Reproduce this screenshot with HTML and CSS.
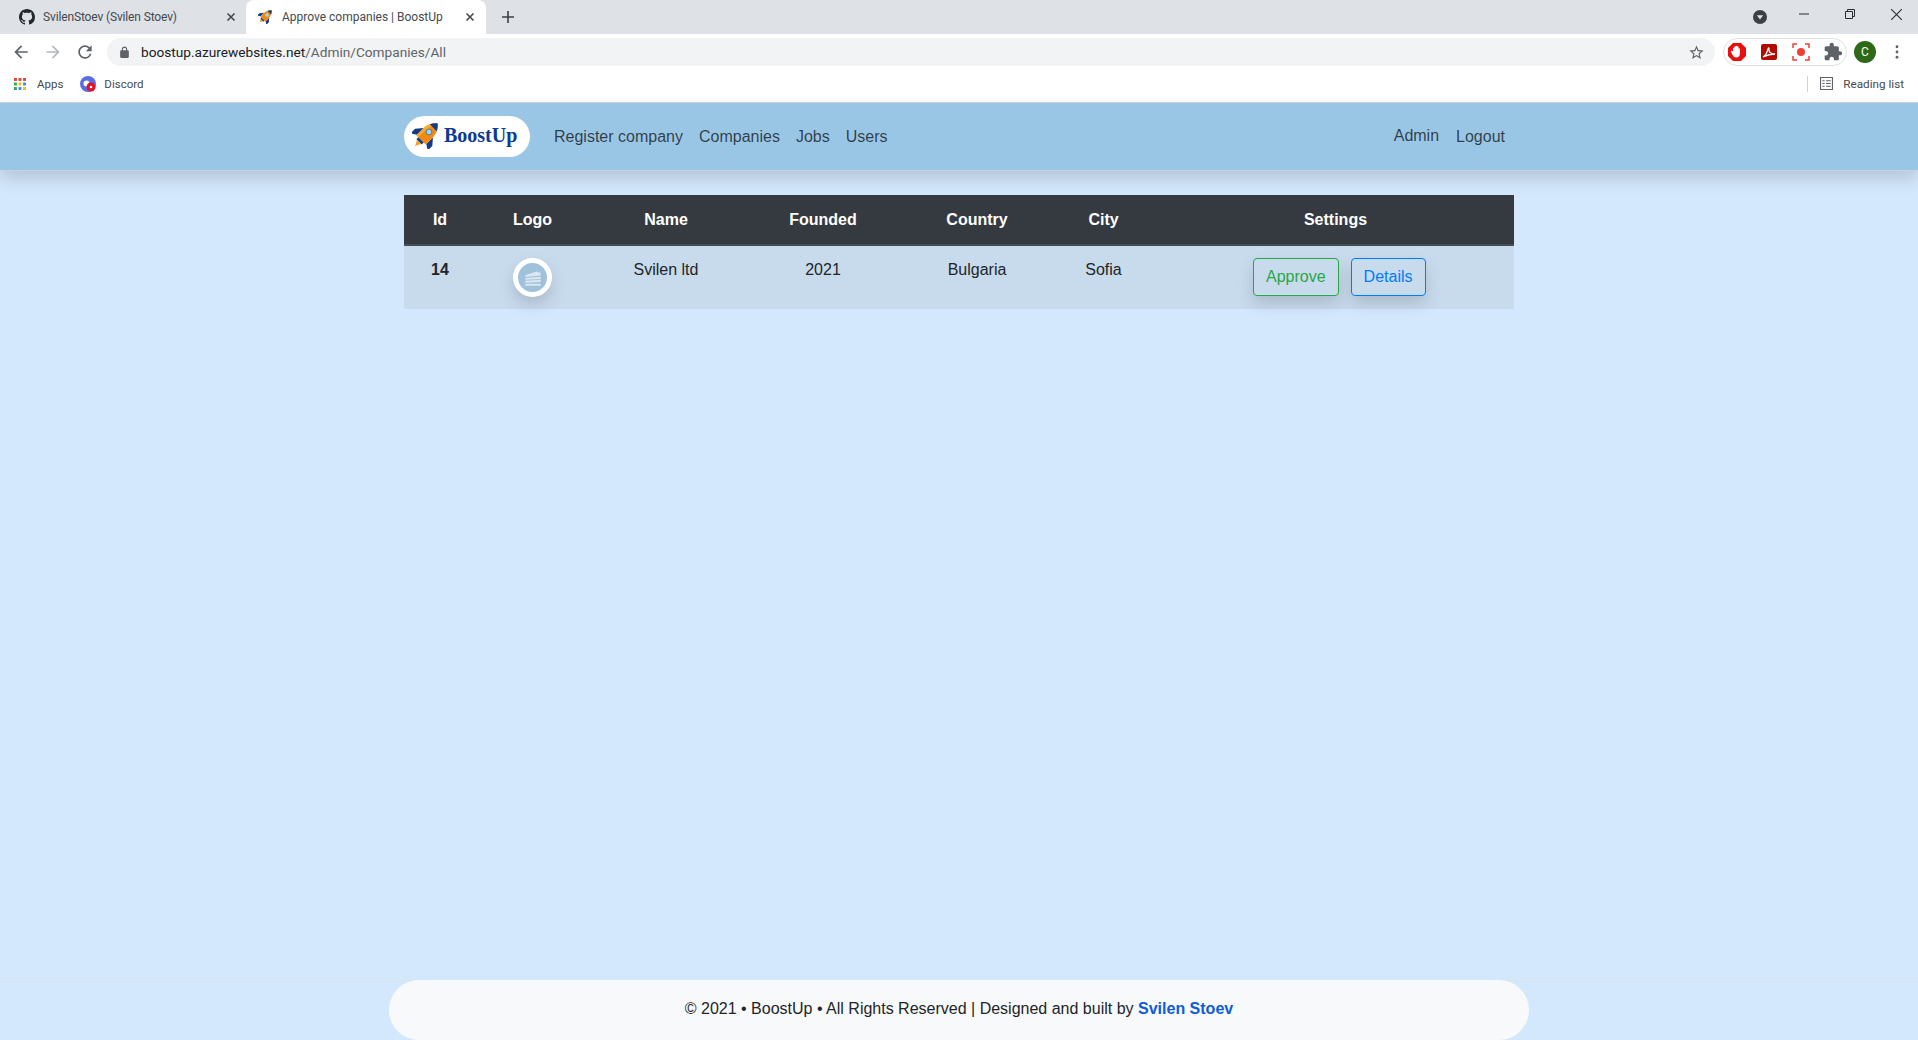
FILE: index.html
```html
<!DOCTYPE html>
<html lang="en">
<head>
<meta charset="utf-8">
<title>Approve companies | BoostUp</title>
<link rel="stylesheet" href="styles.css">
</head>
<body>
<div class="browser">
  <div class="tabstrip">
    <div class="tab">
      <svg class="favicon" viewBox="0 0 16 16"><path fill="#24292e" d="M8 0C3.58 0 0 3.58 0 8c0 3.54 2.29 6.53 5.47 7.59.4.07.55-.17.55-.38 0-.19-.01-.82-.01-1.49-2.01.37-2.53-.49-2.69-.94-.09-.23-.48-.94-.82-1.13-.28-.15-.68-.52-.01-.53.63-.01 1.08.58 1.23.82.72 1.21 1.87.87 2.33.66.07-.52.28-.87.51-1.07-1.78-.2-3.64-.89-3.64-3.95 0-.87.31-1.59.82-2.15-.08-.2-.36-1.02.08-2.12 0 0 .67-.21 2.2.82.64-.18 1.32-.27 2-.27.68 0 1.36.09 2 .27 1.53-1.04 2.2-.82 2.2-.82.44 1.1.16 1.92.08 2.12.51.56.82 1.27.82 2.15 0 3.07-1.87 3.75-3.65 3.95.29.25.54.73.54 1.48 0 1.07-.01 1.93-.01 2.2 0 .21.15.46.55.38A8.013 8.013 0 0016 8c0-4.42-3.58-8-8-8z"/></svg>
      <span class="tab-title tab-title-tight">SvilenStoev (Svilen Stoev)</span>
      <svg class="tab-close" viewBox="0 0 10 10"><path d="M1.5 1.5l7 7M8.5 1.5l-7 7"/></svg>
    </div>
    <div class="tab tab-active">
      <svg class="favicon favicon-rocket" viewBox="0 0 32 32"><g transform="rotate(45 16 16)"><path fill="#0f3d8c" d="M9 14L3 21v7l6-4zM23 14l6 7v7l-6-4z"/><path fill="#f5880f" d="M16 0c5 4 7.500 10 7 18v7H9v-7C8.500 10 11 4 16 0z"/><path fill="#0f3d8c" d="M16 0c2.200 1.800 4 4 5.200 6.500H10.800C12 4 13.800 1.800 16 0zM12 25h8v3h-8z"/><circle cx="16" cy="13" r="3.400" fill="#9fd8f5"/><path fill="#f7a01b" d="M13 28h6l-3 6z"/></g></svg>
      <span class="tab-title">Approve companies | BoostUp</span>
      <svg class="tab-close" viewBox="0 0 10 10"><path d="M1.500 1.500l7 7M8.500 1.500l-7 7"/></svg>
    </div>
    <svg class="newtab" viewBox="0 0 12 12"><path d="M6 0v12M0 6h12"/></svg>
    <div class="strip-space"></div>
    <div class="tabsearch"><svg viewBox="0 0 14 14"><circle cx="7" cy="7" r="7" fill="#3c4043"/><path d="M3.800 5.200h6.400L7 9.600z" fill="#dee1e6"/></svg></div>
    <div class="winctl">
      <svg viewBox="0 0 10 10"><path d="M0 5h10"/></svg>
      <svg viewBox="0 0 10 10"><path d="M.5 2.500h7v7h-7zM2.500 2.500v-2h7v7h-2"/></svg>
      <svg viewBox="0 0 10 10"><path d="M0 0l10 10M10 0L0 10"/></svg>
    </div>
  </div>

  <div class="toolbar">
    <svg class="tool" viewBox="0 0 24 24"><path d="M20 11H7.830l5.590-5.590L12 4l-8 8 8 8 1.410-1.410L7.830 13H20v-2z"/></svg>
    <svg class="tool tool-off" viewBox="0 0 24 24"><path d="M4 11h12.170l-5.590-5.590L12 4l8 8-8 8-1.410-1.410L16.170 13H4v-2z"/></svg>
    <svg class="tool" viewBox="0 0 24 24"><path d="M17.650 6.350A7.958 7.958 0 0012 4c-4.420 0-7.990 3.580-7.990 8s3.570 8 7.990 8c3.730 0 6.840-2.550 7.730-6h-2.080A5.990 5.990 0 0112 18c-3.310 0-6-2.690-6-6s2.690-6 6-6c1.660 0 3.140.690 4.220 1.780L13 11h7V4l-2.350 2.350z"/></svg>
    <div class="omnibox">
      <svg class="lock" viewBox="0 0 24 24"><path d="M18 8h-1V6c0-2.760-2.240-5-5-5S7 3.240 7 6v2H6c-1.100 0-2 .9-2 2v10c0 1.100.9 2 2 2h12c1.100 0 2-.9 2-2V10c0-1.100-.9-2-2-2zM9 6c0-1.660 1.340-3 3-3s3 1.340 3 3v2H9V6z"/></svg>
      <span class="url"><span class="url-host">boostup.azurewebsites.net</span>/Admin/Companies/All</span>
      <svg class="star" viewBox="0 0 24 24"><path d="M22 9.240l-7.190-.62L12 2 9.190 8.630 2 9.240l5.460 4.730L5.820 21 12 17.270 18.180 21l-1.630-7.030L22 9.240zM12 15.400l-3.760 2.270 1-4.280-3.320-2.880 4.380-.38L12 6.100l1.710 4.040 4.380.38-3.320 2.880 1 4.280L12 15.400z"/></svg>
    </div>
    <div class="ext-pill">
      <svg class="ext" viewBox="0 0 20 20"><path fill="#e8100f" d="M6 1h8l5 5v8l-5 5H6l-5-5V6z"/><path fill="#fff" d="M6 9V6.500c0-1 1.300-1 1.300 0V5c0-1 1.400-1 1.400 0V4.500c0-1 1.500-1 1.500 0V5c0-1 1.400-1 1.400 0v2c0-1 1.300-1 1.300 0v4.500c0 2.500-1.500 4-3.700 4-2 0-2.700-1-3.500-2.500L4 10c-.5-1 .7-1.500 1.300-.8z"/></svg>
      <svg class="ext" viewBox="0 0 20 20"><rect x="2" y="2" width="16" height="16" rx="2" fill="#b30b00"/><path fill="none" stroke="#fff" stroke-width="1.300" d="M4 15c2-1 4-4 5-8 .3-1.500 1.300-1.500 1 .5-.3 2.500 2 4.500 6 4.500-3 0-8 1-12 3z"/></svg>
      <svg class="ext" viewBox="0 0 20 20"><path fill="none" stroke="#ea4335" stroke-width="1.500" d="M2 6V2h4M14 2h4v4M18 14v4h-4M6 18H2v-4"/><circle cx="10" cy="10" r="4" fill="#ea4335"/></svg>
      <svg class="ext ext-grey" viewBox="0 0 24 24"><path d="M20.500 11H19V7c0-1.100-.9-2-2-2h-4V3.500C13 2.120 11.880 1 10.500 1S8 2.120 8 3.500V5H4c-1.100 0-1.990.9-1.990 2v3.800H3.500c1.490 0 2.700 1.210 2.700 2.700s-1.210 2.700-2.700 2.700H2V20c0 1.100.9 2 2 2h3.800v-1.500c0-1.490 1.210-2.700 2.700-2.700 1.490 0 2.700 1.210 2.700 2.700V22H17c1.100 0 2-.9 2-2v-4h1.500c1.380 0 2.500-1.120 2.500-2.500S21.880 11 20.500 11z"/></svg>
    </div>
    <div class="avatar-slot"><span class="avatar">C</span></div>
    <div class="menu-slot"><svg class="dots" viewBox="0 0 4 16"><circle cx="2" cy="2" r="1.600"/><circle cx="2" cy="8" r="1.600"/><circle cx="2" cy="14" r="1.600"/></svg></div>
  </div>

  <div class="bookmarks">
    <svg class="apps" viewBox="0 0 14 14"><g fill="#ea4335"><rect width="3.400" height="3.400"/><rect x="5.300" width="3.400" height="3.400"/><rect x="10.600" width="3.400" height="3.400"/></g><g fill="#34a853"><rect y="5.300" width="3.400" height="3.400"/><rect y="10.600" width="3.400" height="3.400"/></g><rect x="5.300" y="5.300" width="3.400" height="3.400" fill="#fbbc05"/><rect x="10.600" y="5.300" width="3.400" height="3.400" fill="#4285f4"/><rect x="5.300" y="10.600" width="3.400" height="3.400" fill="#4285f4"/><rect x="10.600" y="10.600" width="3.400" height="3.400" fill="#fbbc05"/></svg>
    <span class="bm-label">Apps</span>
    <svg class="bm-discord" viewBox="0 0 16 16"><circle cx="8" cy="8" r="8" fill="#5b6ee1"/><circle cx="6.500" cy="7.500" r="3" fill="#fff"/><circle cx="11" cy="11" r="4.500" fill="#e3122a"/><circle cx="11" cy="11" r="1.300" fill="#fff"/></svg>
    <span class="bm-label">Discord</span>
    <div class="strip-space"></div>
    <span class="bm-sep"></span>
    <svg class="reading" viewBox="0 0 14 14"><path fill="none" stroke="#5f6368" stroke-width="1.200" d="M.6.600h12.800v12.800H.6zM2.500 4h2.500M6.500 4h5M2.500 7h2.500M6.500 7h5M2.500 10h2.500M6.500 10h5"/></svg>
    <span class="bm-label bm-reading">Reading list</span>
  </div>
</div>

<div class="app">
  <nav class="navbar">
    <div class="nav-inner">
      <a class="brand">
        <svg class="rocket" viewBox="0 0 32 32"><g transform="rotate(45 16 16)"><path fill="#0f3d8c" d="M9 14L3 21v7l6-4zM23 14l6 7v7l-6-4z"/><path fill="#f5880f" d="M16 0c5 4 7.500 10 7 18v7H9v-7C8.500 10 11 4 16 0z"/><path fill="#fbab2c" d="M16 0c-5 4-7.500 10-7 18v7h3V18c0-7 1-13 4-18z"/><path fill="#0f3d8c" d="M16 0c2.200 1.800 4 4 5.200 6.500H10.800C12 4 13.800 1.800 16 0zM12 25h8v3h-8z"/><circle cx="16" cy="13" r="3.400" fill="#2f7fc0"/><circle cx="16" cy="13" r="2.500" fill="#9fd8f5"/><path fill="#f7a01b" d="M13 28h6l-3 6z"/></g></svg>
        <span class="brand-name">BoostUp</span>
      </a>
      <a class="nav-link">Register company</a>
      <a class="nav-link">Companies</a>
      <a class="nav-link">Jobs</a>
      <a class="nav-link">Users</a>
      <div class="nav-space"></div>
      <a class="nav-link nav-admin">Admin</a>
      <a class="nav-link">Logout</a>
    </div>
  </nav>

  <main class="main">
    <table class="grid">
      <colgroup>
        <col class="c-id"><col class="c-logo"><col class="c-name"><col class="c-founded"><col class="c-country"><col class="c-city"><col class="c-settings">
      </colgroup>
      <thead>
        <tr><th>Id</th><th>Logo</th><th>Name</th><th>Founded</th><th>Country</th><th>City</th><th class="th-settings">Settings</th></tr>
      </thead>
      <tbody>
        <tr>
          <td class="cell-id">14</td>
          <td><span class="company-logo"><svg viewBox="0 0 20 20"><path fill="#dbe7f1" d="M3 7.500L13 4l4 1.500v2.300L3 9zM3 10l14-1.200v2L3 11.500zM3 12.500l14-.8v2L3 14.300zM3 15.200h14V17H3z"/></svg></span></td>
          <td>Svilen ltd</td>
          <td>2021</td>
          <td>Bulgaria</td>
          <td>Sofia</td>
          <td class="cell-actions"><div class="actions"><a class="btn btn-green">Approve</a><a class="btn btn-blue">Details</a></div></td>
        </tr>
      </tbody>
    </table>
  </main>

  <footer class="footer">
    <div class="footer-inner">© 2021 • BoostUp • All Rights Reserved | Designed and built by <a class="footer-link">Svilen Stoev</a></div>
  </footer>
</div>
</body>
</html>
```
FILE: styles.css
```css
* { box-sizing: border-box; }
html, body { margin: 0; height: 100%; }
body {
  display: flex;
  flex-direction: column;
  height: 1040px;
  overflow: hidden;
  background: #d4e8fd;
  font-family: "Liberation Sans", Arial, sans-serif;
  font-size: 16px;
  line-height: 24px;
  color: #212529;
}

/* Browser chrome */
.browser { flex: none; font-family: Roboto, "Noto Sans", sans-serif; background: #fff; }
.tabstrip { display: flex; align-items: center; height: 34px; background: #dee1e6; }
.tab {
  display: flex;
  align-items: center;
  width: 246px;
  height: 34px;
  padding: 0 10px 0 19px;
  color: #45494e;
  font-size: 12px;
}
.tab-active {
  width: 240px;
  padding: 0 11px 0 12px;
  background: #fff;
  border-radius: 8px 8px 0 0;
}
.favicon { width: 16px; height: 16px; flex: none; }
.favicon-rocket { margin-top: -2px; }
.tab-title { flex: 1; margin-left: 8px; white-space: nowrap; }
.tab-title-tight { letter-spacing: -.14px; }
.tab-close { width: 10px; height: 10px; flex: none; fill: none; stroke: #45494e; stroke-width: 1.6; }
.newtab { width: 12px; height: 12px; margin-left: 16px; fill: none; stroke: #3c4043; stroke-width: 1.6; }
.strip-space { flex: 1; }
.tabsearch { display: flex; margin-right: 32px; }
.tabsearch svg { width: 14px; height: 14px; }
.winctl { display: flex; align-items: center; gap: 36px; margin: -6px 16px 0 0; }
.winctl svg { width: 10px; height: 10px; fill: none; stroke: #2a2c2f; stroke-width: 1; }
.winctl svg:last-child { width: 11px; height: 11px; }

.toolbar { display: flex; align-items: center; height: 34px; padding: 2px 5px 0 5px; }
.tool { width: 32px; height: 20px; flex: none; fill: #5f6368; }
.tool-off { fill: #b5b8bc; }
.omnibox {
  flex: 1;
  display: flex;
  align-items: center;
  height: 28px;
  margin-left: 6px;
  padding: 0 10px 0 11px;
  background: #f1f3f4;
  border-radius: 14px;
}
.lock { width: 13px; height: 13px; fill: #5f6368; flex: none; }
.url { flex: 1; margin-left: 10px; font-size: 13.66px; color: #5f6368; white-space: nowrap; }
.url-host { color: #202124; }
.star { width: 17px; height: 17px; fill: #5f6368; flex: none; }
.ext-pill {
  display: flex;
  align-items: center;
  gap: 12px;
  width: 124px;
  height: 28px;
  margin-left: 8px;
  padding-left: 3px;
  background: #fff;
  border: 1px solid #dfe1e5;
  border-radius: 14px;
}
.ext { width: 20px; height: 20px; flex: none; }
.ext-grey { fill: #5f6368; }
.avatar-slot, .menu-slot { display: flex; justify-content: center; align-items: center; width: 32px; flex: none; }
.avatar-slot { margin-left: 2px; }
.avatar {
  display: flex;
  align-items: center;
  justify-content: center;
  width: 22px;
  height: 22px;
  border-radius: 50%;
  background: #2c6a17;
  color: #fff;
  font-size: 12px;
}
.dots { width: 4px; height: 14px; fill: #5f6368; }

.bookmarks {
  display: flex;
  align-items: center;
  height: 35px;
  padding: 0 14px 3px 14px;
  border-bottom: 1px solid #d0d2d5;
  font-size: 11.5px;
  color: #45494e;
}
.apps { width: 12px; height: 12px; flex: none; }
.bm-label { margin-left: 11px; white-space: nowrap; }
.bm-discord { width: 16px; height: 16px; margin-left: 17px; flex: none; }
.bm-discord + .bm-label { margin-left: 8px; }
.bm-sep { width: 1px; height: 16px; background: #cfd1d4; }
.reading { width: 13px; height: 13px; margin-left: 12px; flex: none; }
.bm-reading { font-size: 11.7px; margin-left: 10px; }

/* App */
.app { flex: 1; display: flex; flex-direction: column; min-height: 0; }
.navbar {
  flex: none;
  position: relative;
  height: 68px;
  background: #9ac6e6;
  border-bottom: 1px solid #c6d4df;
  box-shadow: 0 8px 16px rgba(0, 0, 0, .15);
}
.nav-inner {
  display: flex;
  align-items: center;
  width: 1140px;
  height: 100%;
  margin: 0 auto;
  padding: 0 16px 0 15px;
}
.brand {
  display: flex;
  align-items: center;
  width: 126px;
  height: 41px;
  margin-right: 16px;
  padding-left: 8px;
  background: #fff;
  border-radius: 21px;
}
.rocket { width: 30px; height: 30px; flex: none; margin-top: -5px; }
.brand-name {
  margin: -4px 0 0 2px;
  font-family: "Liberation Serif", "Times New Roman", serif;
  font-size: 20px;
  font-weight: 700;
  color: #0a3a96;
}
.nav-link { padding: 8px; color: rgba(0, 0, 0, .7); white-space: nowrap; }
.nav-admin { margin: -2px 1px 0 0; }
.nav-space { flex: 1; }

.main { flex: 1; width: 1110px; margin: 0 auto; padding-top: 24px; }
.grid { width: 1110px; border-collapse: collapse; table-layout: fixed; }
.c-id { width: 72px; }
.c-logo { width: 113px; }
.c-name { width: 154px; }
.c-founded { width: 160px; }
.c-country { width: 148px; }
.c-city { width: 105px; }
.c-settings { width: 358px; }
th {
  height: 50px;
  padding: 12px;
  background: #343a40;
  border-bottom: 2px solid #454d55;
  color: #fff;
  font-weight: 700;
  text-align: center;
  vertical-align: middle;
}
.th-settings { padding-left: 13px; }
td {
  height: 64px;
  padding: 12px;
  background: #c8dbed;
  text-align: center;
  vertical-align: top;
}
.cell-id { font-weight: 700; }
.company-logo {
  display: flex;
  align-items: center;
  justify-content: center;
  width: 39px;
  height: 39px;
  margin: 0 auto;
  background: #9fc1da;
  border: 5px solid #fff;
  border-radius: 50%;
  box-shadow: 0 8px 16px rgba(0, 0, 0, .15);
}
.company-logo svg { width: 22px; height: 22px; flex: none; }
.cell-actions { padding-left: 97px; }
.actions { display: flex; gap: 12px; }
.btn {
  display: block;
  height: 38px;
  padding: 6px 12px;
  border: 1px solid;
  border-radius: 4px;
  box-shadow: 0 8px 16px rgba(0, 0, 0, .15);
}
.btn-green { color: #28a745; border-color: #28a745; }
.btn-blue { color: #007bff; border-color: #007bff; }

.footer { flex: none; height: 60px; border-top: 1px solid #dee2e6; }
.footer-inner {
  display: flex;
  align-items: center;
  justify-content: center;
  gap: 4.5px;
  width: 1140px;
  height: 60px;
  margin: -1px auto 0;
  padding-bottom: 2px;
  background: #f8f9fa;
  border-radius: 30px;
}
.footer-link { color: #0d5cd6; font-weight: 700; }
```
